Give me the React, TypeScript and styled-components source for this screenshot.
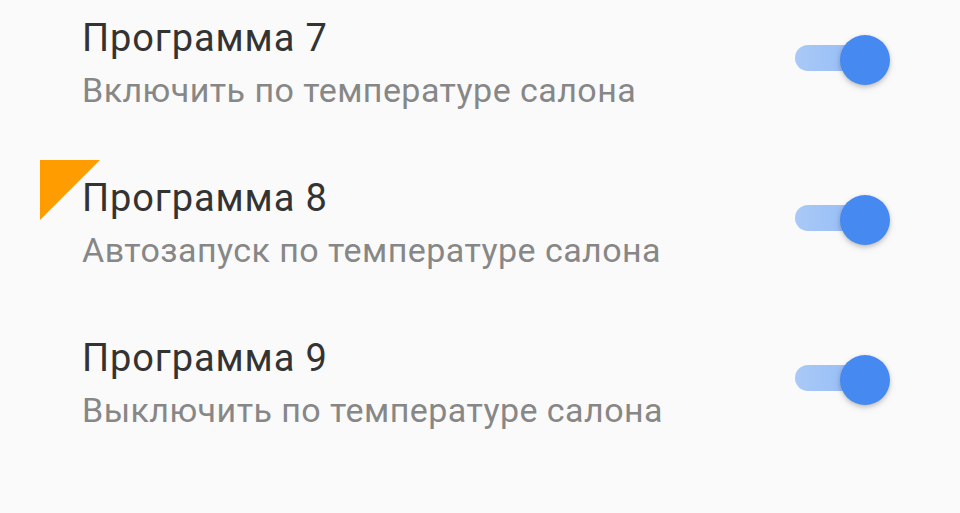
import styled, { createGlobalStyle } from "styled-components";

const Global = createGlobalStyle`
  html, body {
    margin: 0;
    padding: 0;
    background: #fafafa;
  }
  body {
    font-family: Roboto, "Noto Sans", sans-serif;
  }
`;

const Screen = styled.div`
  position: relative;
  width: 960px;
  height: 513px;
  overflow: hidden;
  background: #fafafa;
`;

const List = styled.div`
  display: flex;
  flex-direction: column;
`;

const Row = styled.div`
  height: 160px;
  display: flex;
  align-items: flex-start;
  justify-content: space-between;
  padding: 14px 90px 0 82px;
  box-sizing: border-box;
`;

const Texts = styled.div`
  display: flex;
  flex-direction: column;
`;

const Title = styled.div`
  font-size: 38px;
  line-height: 48px;
  letter-spacing: 0.9px;
  color: #333333;
`;

const Subtitle = styled.div`
  margin-top: 6px;
  font-size: 34px;
  line-height: 44px;
  letter-spacing: 0.45px;
  color: #878787;
`;

const Track = styled.div`
  position: relative;
  margin-top: 31px;
  width: 75px;
  height: 26px;
  border-radius: 13px;
  background: linear-gradient(90deg, #a9c9f7, #93bbf5);
`;

const Thumb = styled.div`
  position: absolute;
  right: -20px;
  top: -10px;
  width: 50px;
  height: 50px;
  border-radius: 50%;
  background: #4589f1;
  box-shadow: 0 2px 4px rgba(0, 0, 0, 0.18), 0 3px 8px rgba(0, 0, 0, 0.08);
`;

const Corner = styled.div`
  position: absolute;
  left: 40px;
  top: 160px;
  width: 0;
  height: 0;
  border-top: 60px solid #ff9d00;
  border-right: 60px solid transparent;
`;

const items = [
  { title: "Программа 7", sub: "Включить по температуре салона" },
  { title: "Программа 8", sub: "Автозапуск по температуре салона" },
  { title: "Программа 9", sub: "Выключить по температуре салона" },
];

export default function App() {
  return (
    <Screen>
      <Global />
      <List>
        {items.map((it) => (
          <Row key={it.title}>
            <Texts>
              <Title>{it.title}</Title>
              <Subtitle>{it.sub}</Subtitle>
            </Texts>
            <Track>
              <Thumb />
            </Track>
          </Row>
        ))}
      </List>
      <Corner />
    </Screen>
  );
}
